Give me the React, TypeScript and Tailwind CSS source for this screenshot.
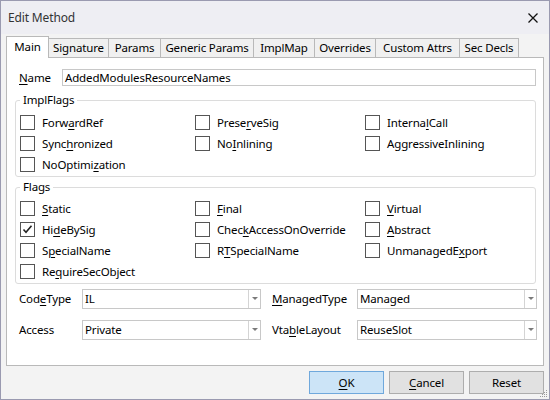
import React from "react";

const font = "font-['Noto_Sans',sans-serif] text-[11.5px] tracking-[-0.15px] leading-[16px] text-black";

function Mn({ t, i }: { t: string; i: number }) {
  if (i < 0) return <>{t}</>;
  return (
    <>
      {t.slice(0, i)}
      <u className="underline underline-offset-[2px]">{t[i]}</u>
      {t.slice(i + 1)}
    </>
  );
}

type Flag = [string, number, boolean?] | null;

const implFlags: Flag[] = [
  ["ForwardRef", 4],
  ["PreserveSig", 5],
  ["InternalCall", 7],
  ["Synchronized", 4],
  ["NoInlining", 2],
  ["AggressiveInlining", 1],
  ["NoOptimization", 8],
  null,
  null,
];

const flags: Flag[] = [
  ["Static", 0],
  ["Final", 0],
  ["Virtual", 0],
  ["HideBySig", 2, true],
  ["CheckAccessOnOverride", 4],
  ["Abstract", 0],
  ["SpecialName", 1],
  ["RTSpecialName", 1],
  ["UnmanagedExport", 10],
  ["RequireSecObject", 2],
  null,
  null,
];

const tabs = [
  ["Signature", 61],
  ["Params", 53],
  ["Generic Params", 94],
  ["ImplMap", 62],
  ["Overrides", 62],
  ["Custom Attrs", 85],
  ["Sec Decls", 60],
] as const;

function CheckBox({ f }: { f: Flag }) {
  if (!f) return <div className="h-[21px]" />;
  const [label, idx, checked] = f;
  return (
    <div className="h-[21px] flex items-center gap-[7px]">
      <div className="w-[15px] h-[15px] border border-[#555] bg-white flex items-center justify-center shrink-0">
        {checked && (
          <svg width="11" height="11" viewBox="0 0 11 11">
            <path d="M1.5 5.5 L4 8.2 L9.5 1.8" fill="none" stroke="#222" strokeWidth="1.6" />
          </svg>
        )}
      </div>
      <span className="whitespace-nowrap">
        <Mn t={label} i={idx} />
      </span>
    </div>
  );
}

function Group({ title, items, extra }: { title: string; items: Flag[]; extra: string }) {
  return (
    <fieldset className={`border border-[#dcdcdc] rounded-[3px] pl-[4px] pb-[1px] ${extra}`}>
      <legend className="px-[3px] leading-[16px]">{title}</legend>
      <div className="grid grid-cols-[175px_170px_1fr]">
        {items.map((f, i) => (
          <CheckBox key={i} f={f} />
        ))}
      </div>
    </fieldset>
  );
}

function Combo({ value, w }: { value: string; w: string }) {
  return (
    <div className={`${w} h-[20px] border border-[#c8c8c8] bg-white flex items-stretch`}>
      <span className="flex-1 pl-[2px] leading-[18px]">{value}</span>
      <div className="w-[12px] border-l border-[#d4d4d4] flex items-center justify-center">
        <svg width="6" height="4" viewBox="0 0 6 4">
          <path d="M0 0 H6 L3 3 Z" fill="#7a7a7a" />
        </svg>
      </div>
    </div>
  );
}

export default function App() {
  return (
    <div className={`${font} relative w-[550px] h-[400px] border border-[#9a9ab0] bg-[#f3f3f3] flex flex-col`}>
      {/* Title bar */}
      <div className="h-[33px] bg-[#eeeef3] flex items-center justify-between pl-[7px] pr-[11px]">
        <span className="text-[#333] text-[12px] leading-[16px]">Edit Method</span>
        <svg width="10" height="10" viewBox="0 0 10 10">
          <path d="M0.5 0.5 L9.5 9.5 M9.5 0.5 L0.5 9.5" stroke="#111" strokeWidth="1.3" />
        </svg>
      </div>

      <div className="px-[5px]">
        {/* Tabs */}
        <div className="mt-[2px] h-[22px] mb-[-1px] flex items-end relative z-10">
          <div className="w-[43px] h-[22px] bg-white border-x border-t border-[#b9b9b9] flex items-center justify-center pb-[1px]">
            Main
          </div>
          {tabs.map(([t, w]) => (
            <div
              key={t}
              style={{ width: w }}
              className="-ml-px h-[20px] bg-[#f0f0f0] border border-[#b9b9b9] flex items-center justify-center"
            >
              {t}
            </div>
          ))}
        </div>

        {/* Panel */}
        <div className="h-[309px] bg-white border border-[#b9b9b9] pl-[8px] pr-[7px]">
          <div className="mt-[11px] flex items-center">
            <span className="w-[47px] pl-[4px] shrink-0">
              <Mn t="Name" i={0} />
            </span>
            <div className="flex-1 h-[17px] border border-[#c8c8c8] pl-[2px] leading-[15px]">
              AddedModulesResourceNames
            </div>
          </div>

          <Group title="ImplFlags" items={implFlags} extra="mt-[6px] pt-[4px]" />
          <Group title="Flags" items={flags} extra="mt-[2px] pt-[3px]" />

          <div className="mt-[5px] grid grid-cols-[67px_179px_96px_180px] gap-y-[11px] items-center">
            <span className="pl-[4px]">
              <Mn t="CodeType" i={3} />
            </span>
            <Combo value="IL" w="w-[179px]" />
            <span className="pl-[11px]">
              <Mn t="ManagedType" i={0} />
            </span>
            <Combo value="Managed" w="w-[180px]" />
            <span className="pl-[4px]">Access</span>
            <Combo value="Private" w="w-[179px]" />
            <span className="pl-[11px]">
              <Mn t="VtableLayout" i={3} />
            </span>
            <Combo value="ReuseSlot" w="w-[180px]" />
          </div>
        </div>

        {/* Buttons */}
        <div className="mt-[5px] flex justify-end gap-[5px]">
          <button className="w-[75px] h-[23px] bg-[#cce4f7] border border-[#6fa8dc]">
            <Mn t="OK" i={0} />
          </button>
          <button className="w-[75px] h-[23px] bg-[#e1e1e1] border border-[#adadad]">
            <Mn t="Cancel" i={0} />
          </button>
          <button className="w-[75px] h-[23px] bg-[#e1e1e1] border border-[#adadad]">Reset</button>
        </div>
      </div>

      <svg className="absolute right-[1px] bottom-[1px]" width="10" height="10" viewBox="0 0 10 10">
        {[
          [8, 2], [6, 4], [8, 4], [4, 6], [6, 6], [8, 6], [2, 8], [4, 8], [6, 8], [8, 8],
        ].map(([x, y], i) => (
          <rect key={i} x={x} y={y} width="1" height="1" fill="#9a9a9a" />
        ))}
      </svg>
    </div>
  );
}
